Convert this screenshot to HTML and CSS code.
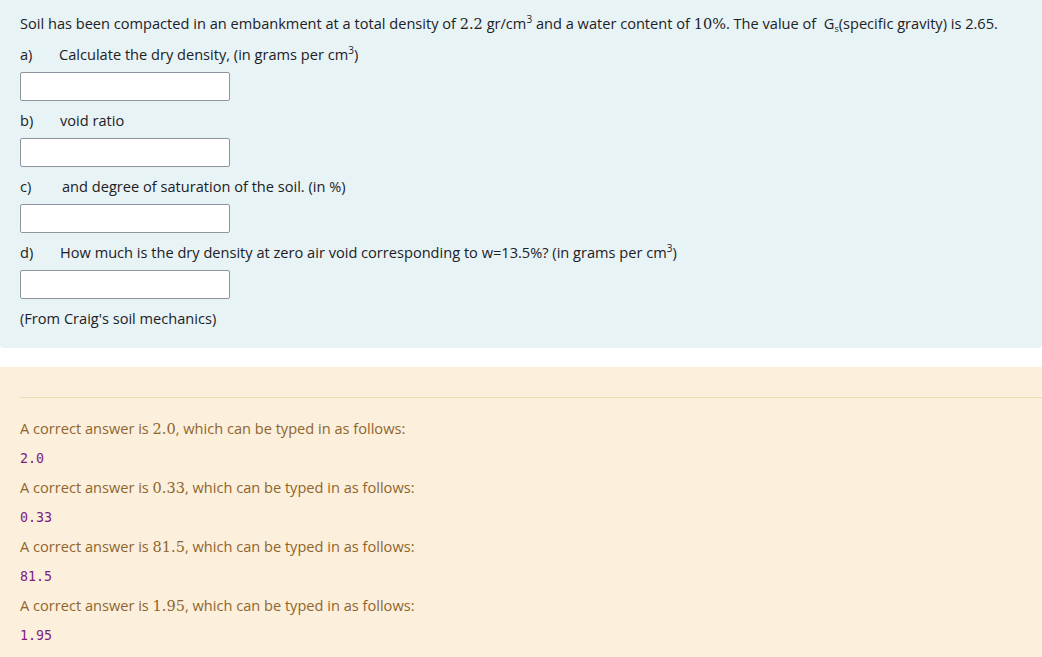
FILE: index.html
```html
<!DOCTYPE html>
<html>
<head>
<meta charset="utf-8">
<link rel="stylesheet" href="styles.css">
</head>
<body>
<div class="que">
  <div class="formulation">
    <p class="intro">Soil has been compacted in an embankment at a total density of <span class="math">2.2</span> gr/cm<sup>3</sup> and a water content of <span class="math">10%</span>. The value of&nbsp; G<sub>s</sub>(specific gravity) is 2.65.</p>
    <p class="label"><span class="tag">a)</span>Calculate the dry density, (in grams per cm<sup>3</sup>)</p>
    <div class="field"><input class="answer" type="text"></div>
    <p class="label"><span class="tag tag-b">b)</span>void ratio</p>
    <div class="field"><input class="answer" type="text"></div>
    <p class="label"><span class="tag tag-c">c)</span>and degree of saturation of the soil. (in %)</p>
    <div class="field"><input class="answer" type="text"></div>
    <p class="label"><span class="tag tag-b">d)</span>How much is the dry density at zero air void corresponding to w=13.5%? (in grams per cm<sup>3</sup>)</p>
    <div class="field"><input class="answer" type="text"></div>
    <p class="label last">(From Craig's soil mechanics)</p>
  </div>
</div>
<div class="outcome">
  <hr class="rule">
  <p class="right">A correct answer is <span class="math">2.0</span>, which can be typed in as follows:</p>
  <p class="code"><code>2.0</code></p>
  <p class="right">A correct answer is <span class="math">0.33</span>, which can be typed in as follows:</p>
  <p class="code"><code>0.33</code></p>
  <p class="right">A correct answer is <span class="math">81.5</span>, which can be typed in as follows:</p>
  <p class="code"><code>81.5</code></p>
  <p class="right">A correct answer is <span class="math">1.95</span>, which can be typed in as follows:</p>
  <p class="code"><code>1.95</code></p>
</div>
</body>
</html>
```
FILE: styles.css
```css
html, body {
  margin: 0;
  padding: 0;
  background: #ffffff;
}
body {
  font-family: "Open Sans", "Noto Sans", sans-serif;
  font-size: 14.6px;
  line-height: 21px;
  color: #1d2125;
  width: 1042px;
  height: 657px;
  overflow: hidden;
}
p {
  margin: 0;
  height: 21px;
}
.que {
  background: #e7f3f5;
  border-radius: 0 0 4px 4px;
  padding: 13px 20px 19px 20px;
}
.intro {
  margin-bottom: 10px;
  white-space: nowrap;
}
.math {
  font-family: "DejaVu Serif", "Liberation Serif", serif;
  font-size: 14.5px;
  line-height: 1;
}
sup {
  font-size: 10px;
  line-height: 0;
  vertical-align: 6px;
}
sub {
  font-size: 9px;
  line-height: 0;
  vertical-align: -3px;
}
.label {
  margin-bottom: 7px;
}
.label.last {
  margin-bottom: 0;
}
.tag {
  display: inline-block;
  width: 39px;
}
.tag-b {
  width: 40px;
}
.tag-c {
  width: 42px;
}
.field {
  margin-bottom: 9px;
  height: 29px;
}
.answer {
  box-sizing: border-box;
  width: 210px;
  height: 29px;
  margin: 0;
  padding: 0 6px;
  border: 1px solid #8f959e;
  border-radius: 2px;
  background: #ffffff;
  display: block;
}
.outcome {
  margin-top: 19px;
  background: #fcefdc;
  padding: 30px 0 20px 20px;
  color: #8e662e;
  height: 240px;
}
.rule {
  margin: 0 0 20px 0;
  border: 0;
  border-top: 1px solid #efd9b2;
  height: 0;
}
.right {
  margin-bottom: 8px;
}
.code {
  margin-bottom: 9px;
}
code {
  font-family: "DejaVu Sans Mono", "Liberation Mono", monospace;
  font-size: 13.3px;
  line-height: 1;
  color: #7d1d81;
}
```
